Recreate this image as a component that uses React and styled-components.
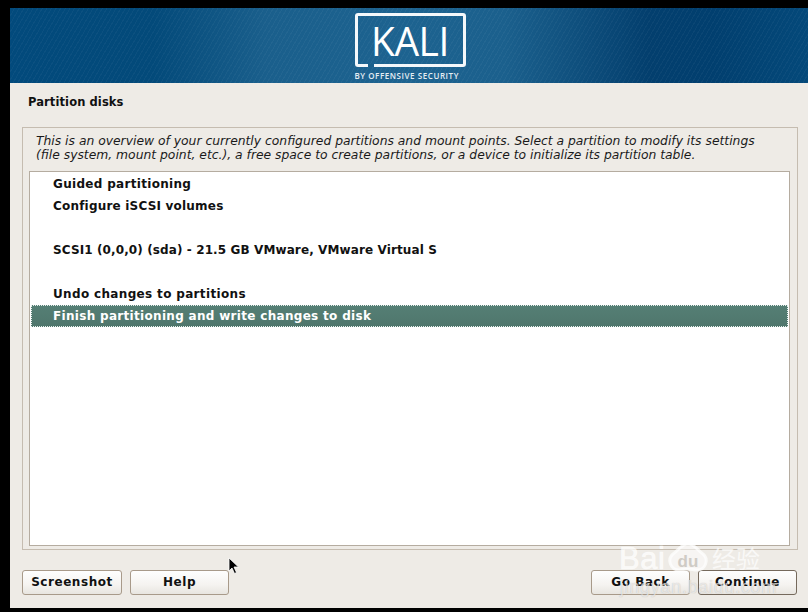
import React from "react";
import styled, { createGlobalStyle } from "styled-components";

const Global = createGlobalStyle`
  html, body { margin: 0; padding: 0; background: #000; }
  body { font-family: "DejaVu Sans", sans-serif; overflow: hidden; }
`;
const Screen = styled.div`
  position: relative;
  width: 808px; height: 612px; box-sizing: border-box;
  padding: 8px 0 4px 10px;
  background: #000;
`;
const Installer = styled.div`
  height: 100%;
  display: flex; flex-direction: column;
  background: #eeebe6;
`;
const Banner = styled.header`
  height: 75px; flex: none;
  display: flex; justify-content: center;
  padding-left: 2px;
  box-sizing: border-box;
  background:
    repeating-linear-gradient(-60deg, rgba(255,255,255,.035) 0 1px, transparent 1px 4px),
    linear-gradient(90deg, #024a7c 0%, #034a7a 18%, #1a5f8c 32%, #1d6390 50%, #1b608d 62%, #033f6e 80%, #013f6f 88%, #04497a 100%);
`;
const Logo = styled.div`
  width: 111px;
  padding-top: 5px;
  display: flex; flex-direction: column; align-items: stretch;
  color: #fff;
`;
const Frame = styled.div`
  position: relative;
  box-sizing: border-box;
  height: 54px;
  border: 3px solid #f4f8fb;
  border-radius: 3px;
  display: flex; align-items: center; justify-content: center;
  &::after {
    content: ""; position: absolute; left: 10px; bottom: -3px;
    width: 6px; height: 3px; background: #1b608d;
  }
`;
const LogoWord = styled.span`
  font: 500 41px/1 "Open Sans", sans-serif;
  letter-spacing: -0.5px;
  transform: scaleX(.95);
`;
const LogoTag = styled.span`
  margin-top: 4px;
  font: 600 8px/10px "Open Sans", sans-serif;
  letter-spacing: .56px;
  white-space: nowrap;
  color: #e4edf3;
`;
const Title = styled.h1`
  margin: 0; flex: none;
  height: 44px; box-sizing: border-box;
  padding: 12px 0 0 18px;
  font: 700 11.5px/15px "DejaVu Sans", sans-serif;
  letter-spacing: .1px;
  color: #111;
`;
const Group = styled.section`
  flex: 1; min-height: 0;
  margin: 0 10px 0 12px;
  border: 1px solid #c5bcb0;
  padding: 6px 7px 3px 6px;
  display: flex; flex-direction: column;
`;
const Intro = styled.p`
  margin: 0 0 7px 7px;
  height: 30px;
  font: italic 400 12.34px/14px "DejaVu Sans", sans-serif;
  color: #1a1a1a;
  white-space: pre-line;
`;
const List = styled.ul`
  flex: 1;
  margin: 0; padding: 1px;
  list-style: none;
  background: #fff;
  border: 1px solid #b5aca0;
`;
const Row = styled.li`
  box-sizing: border-box;
  height: 22px;
  padding-left: 22px;
  font: 700 12px/22px "DejaVu Sans", sans-serif;
  letter-spacing: ${p => p.$track}px;
  white-space: pre;
  color: ${p => (p.$selected ? "#fff" : "#111")};
  background: ${p => (p.$selected ? "linear-gradient(#557f75, #4f766c)" : "transparent")};
  outline: ${p => (p.$selected ? "1px dotted #e8efec" : "none")};
  outline-offset: -1px;
`;
const Actions = styled.footer`
  flex: none; height: 58px;
  display: flex; align-items: flex-start;
  gap: 8px;
  padding: 20px 11px 0 12px;
  box-sizing: border-box;
`;
const Button = styled.button`
  width: ${p => p.$w || 99}px; height: 25px;
  margin-left: ${p => (p.$push ? "auto" : "0")};
  padding: 0 0 2px;
  border: 1px solid ${p => (p.$dark ? "#75695c" : "#a89a8a")};
  border-radius: 3px;
  background: linear-gradient(#fefefe, #f5f3f0 60%, #e8e5e0);
  font: 700 12px/1 "DejaVu Sans", sans-serif;
  letter-spacing: .55px;
  color: #111;
`;
const Cursor = styled.svg`
  position: absolute; left: 228px; top: 557px;
`;
const Watermark = styled.div`
  position: absolute; left: 618px; top: 522px;
  width: 150px; height: 80px;
  pointer-events: none;
`;
const PawIcon = styled.svg`
  position: absolute; left: 46px; top: 0;
`;
const MarkBai = styled.span`
  position: absolute; left: 1px; top: 19px;
  font: 400 31px/36px "Liberation Sans", sans-serif;
  letter-spacing: .5px;
  color: rgba(255,255,255,.72);
  -webkit-text-stroke: .6px rgba(255,255,255,.72);
`;
const MarkCn = styled.span`
  position: absolute; left: 94px; top: 22px;
  font: 400 24px/28px "Noto Sans CJK SC", sans-serif;
  color: rgba(255,255,255,.7);
`;
const MarkUrl = styled.span`
  position: absolute; left: 2px; top: 55px;
  font: 400 18px/20px "Liberation Sans", sans-serif;
  letter-spacing: .7px;
  color: rgba(255,255,255,.6);
  text-shadow: 0 0 1px rgba(110,105,100,.4);
`;

const rows = [
  ["Guided partitioning", 0.31],
  ["Configure iSCSI volumes", 0.2],
  ["", 0],
  ["SCSI1 (0,0,0) (sda) - 21.5 GB VMware, VMware Virtual S", 0.11],
  ["", 0],
  ["Undo changes to partitions", 0.34],
  ["Finish partitioning and write changes to disk", 0.31],
];

export default function App() {
  return (
    <Screen>
      <Global />
      <Installer>
        <Banner>
          <Logo>
            <Frame><LogoWord>KALI</LogoWord></Frame>
            <LogoTag>BY OFFENSIVE SECURITY</LogoTag>
          </Logo>
        </Banner>
        <Title>Partition disks</Title>
        <Group>
          <Intro>{"This is an overview of your currently configured partitions and mount points. Select a partition to modify its settings\n(file system, mount point, etc.), a free space to create partitions, or a device to initialize its partition table."}</Intro>
          <List>
            {rows.map(([text, track], i) => (
              <Row key={i} $track={track} $selected={i === 6}>{text}</Row>
            ))}
          </List>
        </Group>
        <Actions>
          <Button $w={100}>Screenshot</Button>
          <Button>Help</Button>
          <Button $push>Go Back</Button>
          <Button $dark>Continue</Button>
        </Actions>
      </Installer>
      <Cursor width="12" height="18" viewBox="0 0 12 18">
        <path d="M1 1v13l3-3 2.5 5.5 2-1L6 10h4.5z" fill="#000" stroke="#fff" strokeWidth=".8" />
      </Cursor>
      <Watermark>
        <PawIcon width="48" height="52" viewBox="0 0 48 52" fill="none" stroke="rgba(255,255,255,.72)" strokeWidth="3">
          <ellipse cx="9" cy="14" rx="4" ry="6" />
          <ellipse cx="20" cy="8" rx="4" ry="5.5" />
          <ellipse cx="31" cy="8" rx="4" ry="5.5" />
          <ellipse cx="41" cy="14" rx="4" ry="6" />
          <path d="M24 22c-7 0-9 6-15 10-6 5-3 16 6 16 3 0 6-1 9-1s6 1 9 1c9 0 12-11 6-16-6-4-8-10-15-10z" fill="rgba(255,255,255,.5)" />
          <text x="24" y="45" textAnchor="middle" fontFamily="Liberation Sans" fontWeight="700" fontSize="17" stroke="none" fill="#cfcbc5">du</text>
        </PawIcon>
        <MarkBai>Bai</MarkBai>
        <MarkCn>经验</MarkCn>
        <MarkUrl>jingyan.baidu.com</MarkUrl>
      </Watermark>
    </Screen>
  );
}
